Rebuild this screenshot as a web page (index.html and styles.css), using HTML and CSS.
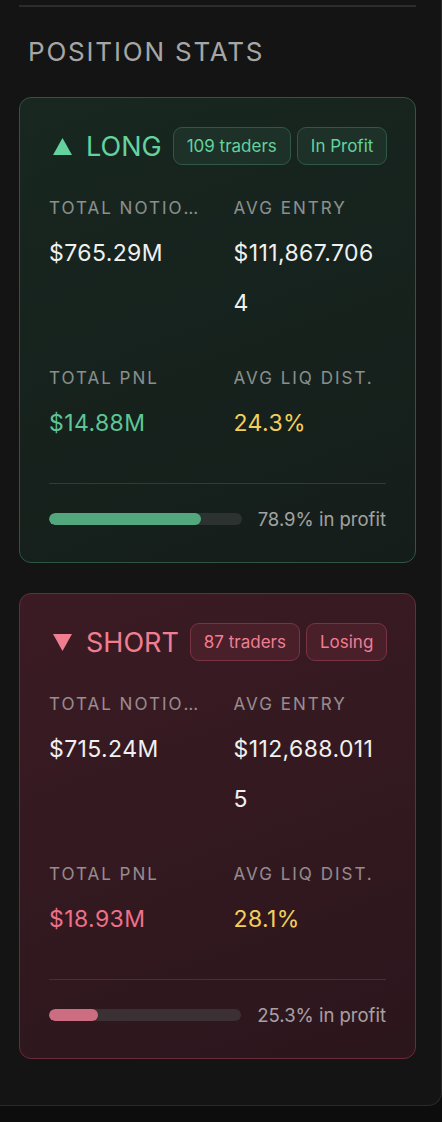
FILE: index.html
```html
<!DOCTYPE html>
<html lang="en">
<head>
    <meta charset="UTF-8" />
    <meta name="viewport" content="width=device-width, initial-scale=1.0" />
    <title>Position Stats</title>
    <link rel="stylesheet" href="styles.css">
</head>
<body>

<div class="panel">
    <div class="rule"></div>
    <h2 class="panel-title">Position Stats</h2>

    <!-- long side -->
    <section class="side side-long">
        <div class="side-head">
            <span class="side-name">
                <svg class="arrow" viewBox="0 0 19 17"><path d="M9.5 0 L19 17 L0 17 Z"/></svg>
                LONG
            </span>
            <span class="pill">109 traders</span>
            <span class="pill">In Profit</span>
        </div>
        <div class="stats">
            <div class="stat">
                <div class="stat-label">Total Notional</div>
                <div class="stat-value">$765.29M</div>
            </div>
            <div class="stat">
                <div class="stat-label">Avg Entry</div>
                <div class="stat-value">$111,867.7064</div>
            </div>
            <div class="stat">
                <div class="stat-label">Total PnL</div>
                <div class="stat-value pnl">$14.88M</div>
            </div>
            <div class="stat">
                <div class="stat-label">Avg Liq Dist.</div>
                <div class="stat-value liq">24.3%</div>
            </div>
        </div>
        <div class="side-foot">
            <div class="bar"><div class="bar-fill" style="width: 78.9%"></div></div>
            <span class="bar-text">78.9% in profit</span>
        </div>
    </section>

    <!-- short side -->
    <section class="side side-short">
        <div class="side-head">
            <span class="side-name">
                <svg class="arrow" viewBox="0 0 19 17"><path d="M0 0 L19 0 L9.5 17 Z"/></svg>
                SHORT
            </span>
            <span class="pill">87 traders</span>
            <span class="pill">Losing</span>
        </div>
        <div class="stats">
            <div class="stat">
                <div class="stat-label">Total Notional</div>
                <div class="stat-value">$715.24M</div>
            </div>
            <div class="stat">
                <div class="stat-label">Avg Entry</div>
                <div class="stat-value">$112,688.0115</div>
            </div>
            <div class="stat">
                <div class="stat-label">Total PnL</div>
                <div class="stat-value pnl">$18.93M</div>
            </div>
            <div class="stat">
                <div class="stat-label">Avg Liq Dist.</div>
                <div class="stat-value liq">28.1%</div>
            </div>
        </div>
        <div class="side-foot">
            <div class="bar"><div class="bar-fill" style="width: 25.3%"></div></div>
            <span class="bar-text">25.3% in profit</span>
        </div>
    </section>
</div>

</body>
</html>
```

FILE: styles.css
```css
body {
    margin: 0;
    background: #0d0d0d;
    font-family: Inter, "Liberation Sans", sans-serif;
    color: #f0f0f0;
}
.panel {
    width: 442px;
    box-sizing: border-box;
    background: #141414;
    border-right: 1px solid #2a2a2a;
    border-bottom: 1px solid #2a2a2a;
    border-bottom-right-radius: 14px;
    padding: 5px 25px 46px 19px;
}
.rule {
    height: 2px;
    background: #2c2c2c;
}
.panel-title {
    margin: 29px 0 30px 9px;
    font-size: 26px;
    line-height: 31px;
    font-weight: 400;
    letter-spacing: 1.8px;
    text-transform: uppercase;
    color: rgba(255, 255, 255, 0.64);
}
.side {
    border: 1px solid;
    border-radius: 12px;
    padding: 29px;
    margin-bottom: 30px;
}
.side:last-child {
    margin-bottom: 0;
}
.side-long {
    background: linear-gradient(160deg, #182720 0%, #151d1a 100%);
    border-color: #2e5643;
    --accent: #63d29e;
    --pill-bg: #1d3128;
    --pill-border: #2f5846;
    --line: #2f3d37;
    --track: #2c3230;
    --fill: #52a87c;
    --pnl: #5cc697;
}
.side-short {
    background: linear-gradient(160deg, #3b1b24 0%, #2b161c 100%);
    border-color: #6a2c3b;
    --accent: #f07e91;
    --pill-bg: #491f2a;
    --pill-border: #793345;
    --line: #4d2e35;
    --track: #3b3033;
    --fill: #cd6d81;
    --pnl: #ec7189;
}
.side-head {
    display: flex;
    align-items: center;
    gap: 6px;
    height: 38px;
}
.side-name {
    display: flex;
    align-items: center;
    gap: 14px;
    margin: 0 5px 0 4px;
    font-size: 27px;
    color: var(--accent);
    white-space: nowrap;
}
.arrow {
    width: 19px;
    height: 17px;
    fill: var(--accent);
}
.pill {
    display: flex;
    align-items: center;
    height: 38px;
    box-sizing: border-box;
    padding: 0 13px;
    border: 1px solid var(--pill-border);
    border-radius: 9px;
    background: var(--pill-bg);
    color: var(--accent);
    font-size: 17px;
    white-space: nowrap;
}
.stats {
    display: grid;
    grid-template-columns: 1fr 1fr;
    column-gap: 32px;
    row-gap: 37px;
    margin-top: 30px;
}
.stat {
    min-width: 0;
}
.stat-label {
    font-size: 17px;
    line-height: 27px;
    letter-spacing: 2px;
    text-transform: uppercase;
    color: rgba(255, 255, 255, 0.5);
    white-space: nowrap;
    overflow: hidden;
    text-overflow: ellipsis;
}
.stat-value {
    margin-top: 6px;
    font-size: 23px;
    line-height: 50px;
    letter-spacing: 0.4px;
    overflow-wrap: anywhere;
}
.stat-value.pnl {
    color: var(--pnl);
}
.stat-value.liq {
    color: #f2cf5c;
}
.side-foot {
    display: flex;
    align-items: center;
    gap: 16px;
    margin-top: 35px;
    padding-top: 21px;
    border-top: 1px solid var(--line);
    height: 28px;
}
.bar {
    flex: 1;
    height: 12px;
    border-radius: 6px;
    background: var(--track);
    overflow: hidden;
}
.bar-fill {
    height: 100%;
    border-radius: 6px;
    background: var(--fill);
}
.bar-text {
    font-size: 18.5px;
    color: rgba(255, 255, 255, 0.6);
    white-space: nowrap;
}
```
